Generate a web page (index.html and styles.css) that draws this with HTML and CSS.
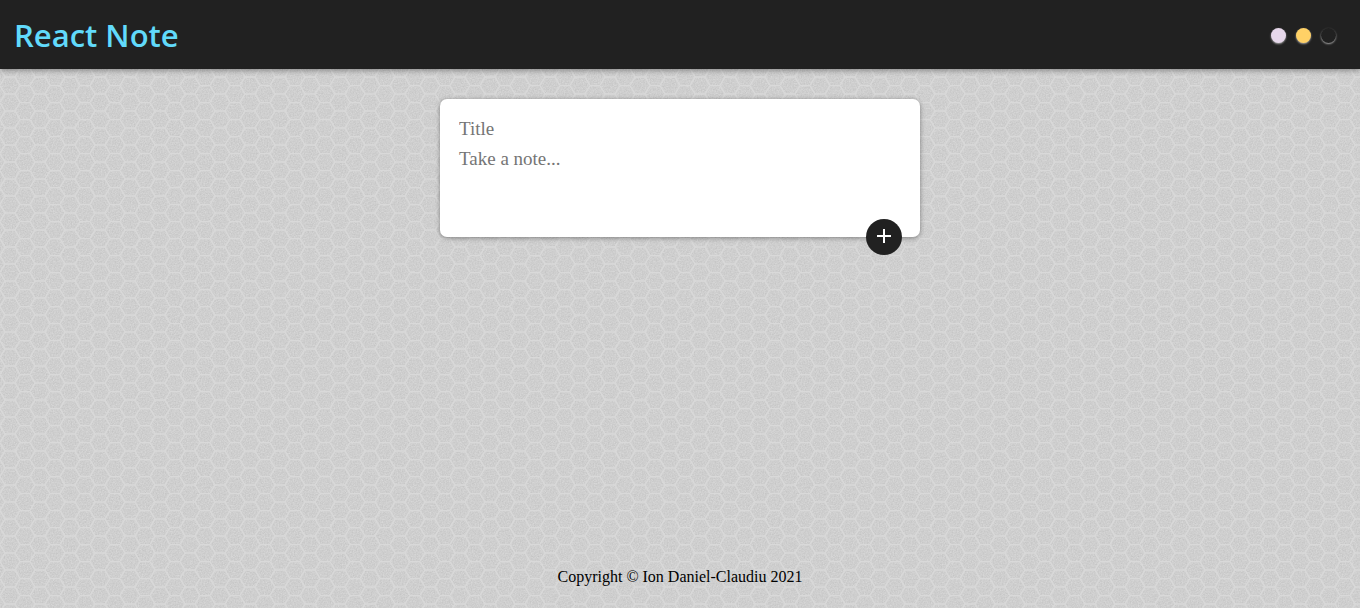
FILE: index.html
```
<!DOCTYPE html>
<html lang="en">
<head>
<meta charset="utf-8">
<meta name="viewport" content="width=device-width, initial-scale=1">
<title>React Note</title>
<link rel="stylesheet" href="styles.css">
</head>
<body>
<header class="header">
  <h1 class="brand">React Note</h1>
  <div class="themes">
    <button class="theme theme-lilac" type="button" aria-label="Lilac theme"></button>
    <button class="theme theme-amber" type="button" aria-label="Amber theme"></button>
    <button class="theme theme-dark" type="button" aria-label="Dark theme"></button>
  </div>
</header>
<main class="main">
  <form class="note-form">
    <input class="field" type="text" name="title" placeholder="Title" aria-label="Title">
    <textarea class="field note-text" name="content" rows="3" placeholder="Take a note..." aria-label="Note"></textarea>
    <button class="add" type="button" aria-label="Add note">
      <svg class="add-icon" viewBox="0 0 24 24" aria-hidden="true"><path d="M19 12h-6v6h-2v-6H5v-2h6V4h2v6h6v2z"/></svg>
    </button>
  </form>
</main>
<footer class="footer">
  <p class="copyright">Copyright © Ion Daniel-Claudiu 2021</p>
</footer>
</body>
</html>
```

FILE: styles.css
```
* {
  box-sizing: border-box;
  margin: 0;
  padding: 0;
}

body {
  display: flex;
  flex-direction: column;
  min-height: 100vh;
  font-family: "Liberation Serif", serif;
  background-color: #cecece;
  background-image:
    url("data:image/svg+xml,%3Csvg xmlns='http://www.w3.org/2000/svg' width='30' height='17'%3E%3Cpath d='M20 .5H30M5 9H15M0 .5L5 9L0 17.5M20 .5L15 9L20 17.5' fill='none' stroke='%23d9d9d9' stroke-width='1.4'/%3E%3C/svg%3E"),
    url("data:image/svg+xml,%3Csvg xmlns='http://www.w3.org/2000/svg' width='200' height='200'%3E%3Cfilter id='n' x='0' y='0' width='100%25' height='100%25' color-interpolation-filters='sRGB'%3E%3CfeTurbulence type='fractalNoise' baseFrequency='0.73' numOctaves='3' stitchTiles='stitch'/%3E%3CfeColorMatrix values='.11 0 0 0 .755 .11 0 0 0 .755 .11 0 0 0 .755 0 0 0 0 1'/%3E%3C/filter%3E%3Crect width='200' height='200' filter='url(%23n)'/%3E%3C/svg%3E");
}

.header {
  display: flex;
  align-items: center;
  justify-content: space-between;
  min-height: 69px;
  padding: 0 24px 0 14px;
  background: #212121;
  box-shadow: 0 1px 6px rgba(0, 0, 0, 0.4);
}

.brand {
  font: 600 31px/44px "Trebuchet MS", "Open Sans", sans-serif;
  color: #61dafb;
}

.themes {
  display: flex;
  gap: 10px;
  padding-top: 2px;
}

.theme {
  width: 15px;
  height: 15px;
  border: 0;
  border-radius: 50%;
  box-shadow: 0 1px 2px rgba(255, 255, 255, 0.6);
}

.theme-lilac {
  background: #e6d7ea;
}

.theme-amber {
  background: #ffd166;
}

.theme-dark {
  background: #212121;
}

.main {
  flex: 1;
  padding: 30px 16px;
}

.note-form {
  position: relative;
  display: flex;
  flex-direction: column;
  max-width: 480px;
  margin: 0 auto;
  padding: 15px;
  background: #fff;
  border-radius: 7px;
  box-shadow: 0 1px 5px rgba(0, 0, 0, 0.4);
}

.field {
  width: 100%;
  padding: 4px;
  border: 0;
  outline: none;
  background: transparent;
  font: 19px/22px "Liberation Serif", serif;
  resize: none;
}

.field::placeholder {
  color: #757575;
}

.note-text {
  height: 78px;
}

.add {
  position: absolute;
  right: 18px;
  bottom: -18px;
  display: grid;
  place-items: center;
  width: 36px;
  height: 36px;
  border: 0;
  border-radius: 50%;
  background: #212121;
}

.add-icon {
  width: 24px;
  height: 24px;
  fill: #fff;
}

.footer {
  padding: 20px 16px;
  text-align: center;
}

.copyright {
  font-size: 16px;
  line-height: 22px;
}
```
